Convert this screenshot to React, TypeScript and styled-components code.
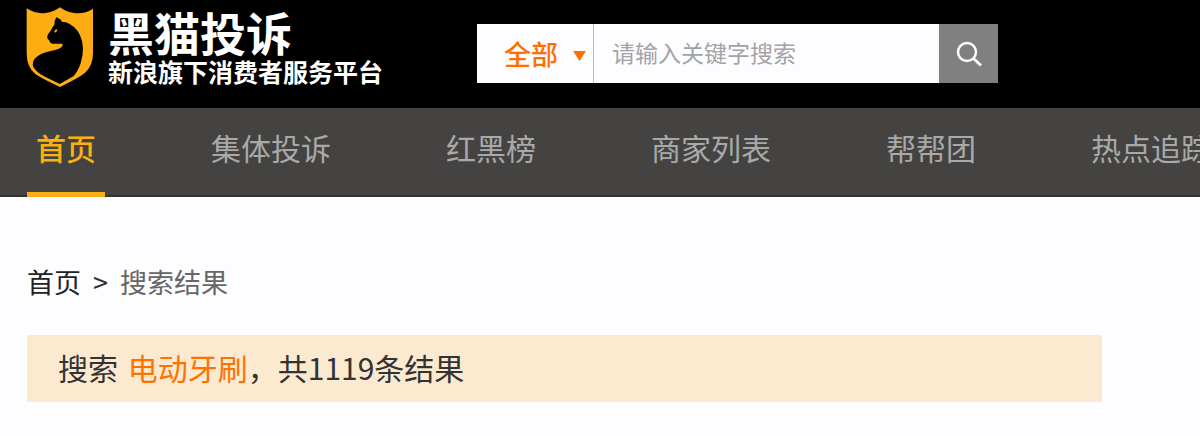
import React from "react";
import styled, { createGlobalStyle } from "styled-components";

const GlobalStyle = createGlobalStyle`
  *, *::before, *::after { box-sizing: border-box; }
  body {
    margin: 0;
    background: #fdfcff;
    color: #333;
    font-family: "Noto Sans CJK SC", "Noto Sans", sans-serif;
    overflow-x: hidden;
  }
  a { color: inherit; text-decoration: none; }
`;

const Header = styled.header`
  display: flex;
  align-items: flex-start;
  gap: 94px;
  height: 108px;
  padding: 0 26px;
  background: #000;
`;

const Brand = styled.a`
  display: flex;
  flex: none;
  gap: 13px;
  padding-top: 6px;
  color: #fff;
`;

const BrandText = styled.span`
  display: flex;
  flex-direction: column;
  white-space: nowrap;
  font-weight: 700;
`;

const BrandName = styled.span`
  font-size: 46px;
  line-height: 50px;
`;

const BrandTagline = styled.span`
  font-size: 25px;
  line-height: 30px;
`;

const SearchForm = styled.form`
  display: flex;
  flex: 0 1 521px;
  min-width: 0;
  height: 59px;
  margin-top: 24px;
  background: #fdfcff;
`;

const Scope = styled.label`
  position: relative;
  flex: none;
  display: flex;
  width: 117px;
  border-right: 1px solid #bbb;
  color: #ff6f00;
`;

const ScopeSelect = styled.select`
  appearance: none;
  width: 100%;
  padding: 0 0 0 27px;
  border: 0;
  outline: 0;
  background: transparent;
  color: inherit;
  font: 500 27px/40px "Noto Sans CJK SC", sans-serif;
`;

const Caret = styled.svg`
  position: absolute;
  right: 7px;
  top: 27px;
  pointer-events: none;
`;

const SearchInput = styled.input`
  flex: 1;
  min-width: 0;
  padding: 0 18px 4px;
  border: 0;
  outline: 0;
  background: transparent;
  color: #333;
  font: 400 23px/36px "Noto Sans CJK SC", sans-serif;
  &::placeholder { color: #a3a3a6; opacity: 1; }
`;

const SearchButton = styled.button`
  flex: none;
  display: flex;
  align-items: center;
  justify-content: center;
  width: 59px;
  padding: 0;
  border: 0;
  background: #808080;
`;

const Nav = styled.nav`
  display: flex;
  gap: 97px;
  height: 89px;
  padding-left: 27px;
  overflow: hidden;
  background: #444342;
  box-shadow: inset 0 -2px #353433;
`;

const NavLink = styled.a<{ $active?: boolean }>`
  flex: none;
  padding: 0 9px 6px;
  border-bottom: 5px solid ${(p) => (p.$active ? "#fcae16" : "transparent")};
  color: ${(p) => (p.$active ? "#fdb010" : "#a9a9a9")};
  font-size: 30px;
  font-weight: ${(p) => (p.$active ? 500 : 400)};
  line-height: 78px;
  white-space: nowrap;
`;

const Main = styled.main`
  padding: 66px 27px 34px;
`;

const Breadcrumb = styled.nav`
  display: flex;
  gap: 12px;
  font-size: 27px;
  line-height: 38px;
  color: #666;
`;

const Crumb = styled.a`
  color: #222;
`;

const Separator = styled.span`
  color: #333;
`;

const ResultBar = styled.p`
  max-width: 1075px;
  margin: 34px 0 0;
  padding: 0 31px 3px;
  background: #fcead0;
  font-size: 30px;
  line-height: 64px;
`;

const Keyword = styled.em`
  margin-left: 3px;
  color: #ff7200;
  font-style: normal;
`;

const navItems = ["首页", "集体投诉", "红黑榜", "商家列表", "帮帮团", "热点追踪"];

const CatShield = () => (
  <svg width="69" height="84" viewBox="18 18 207 252" aria-hidden="true">
    <path
      d="M20 25Q48 43 76 39Q102 36 120 22Q137 36 163 39Q193 43 219 26V160Q219 198 195 218Q178 232 120 261Q64 235 46 222Q20 202 20 160Z"
      fill="#fdac12"
    />
    <path
      d="M109 52Q102 63 103 75Q96 81 93 91L84 103Q80 111 83 117L88 121Q88 130 98 131L127 131Q130 137 124 142Q114 150 92 153Q61 159 46 174Q35 186 40 201Q50 217 72 229L119 252L160 229Q174 214 182 190Q197 141 180 106Q168 78 138 67Q131 65 126 66Q123 57 109 52Z"
      fill="#000"
    />
    <path d="M103 98Q103 88 112 88Q111 98 103 98Z" fill="#fdac12" />
  </svg>
);

const SearchIcon = () => (
  <svg width="28" height="28" viewBox="0 0 28 28" fill="none" stroke="#fff" aria-hidden="true">
    <circle cx="12" cy="12" r="9" strokeWidth="2.4" />
    <path d="M18.5 18.5L26 25.5" strokeWidth="2.8" />
  </svg>
);

export default function App() {
  return (
    <>
      <GlobalStyle />
      <Header>
        <Brand href="#">
          <CatShield />
          <BrandText>
            <BrandName>黑猫投诉</BrandName>
            <BrandTagline>新浪旗下消费者服务平台</BrandTagline>
          </BrandText>
        </Brand>
        <SearchForm role="search" onSubmit={(e) => e.preventDefault()}>
          <Scope>
            <ScopeSelect aria-label="搜索范围">
              <option>全部</option>
            </ScopeSelect>
            <Caret width="13" height="10" viewBox="0 0 13 10" aria-hidden="true">
              <path d="M0 0H13L6.5 10Z" fill="#ff6f00" />
            </Caret>
          </Scope>
          <SearchInput type="text" aria-label="关键字" placeholder="请输入关键字搜索" />
          <SearchButton type="submit" aria-label="搜索">
            <SearchIcon />
          </SearchButton>
        </SearchForm>
      </Header>
      <Nav>
        {navItems.map((label, i) => (
          <NavLink key={label} href="#" $active={i === 0}>
            {label}
          </NavLink>
        ))}
      </Nav>
      <Main>
        <Breadcrumb>
          <Crumb href="#">首页</Crumb>
          <Separator>&gt;</Separator>
          <span>搜索结果</span>
        </Breadcrumb>
        <ResultBar>
          搜索 <Keyword>电动牙刷</Keyword>，共1119条结果
        </ResultBar>
      </Main>
    </>
  );
}
